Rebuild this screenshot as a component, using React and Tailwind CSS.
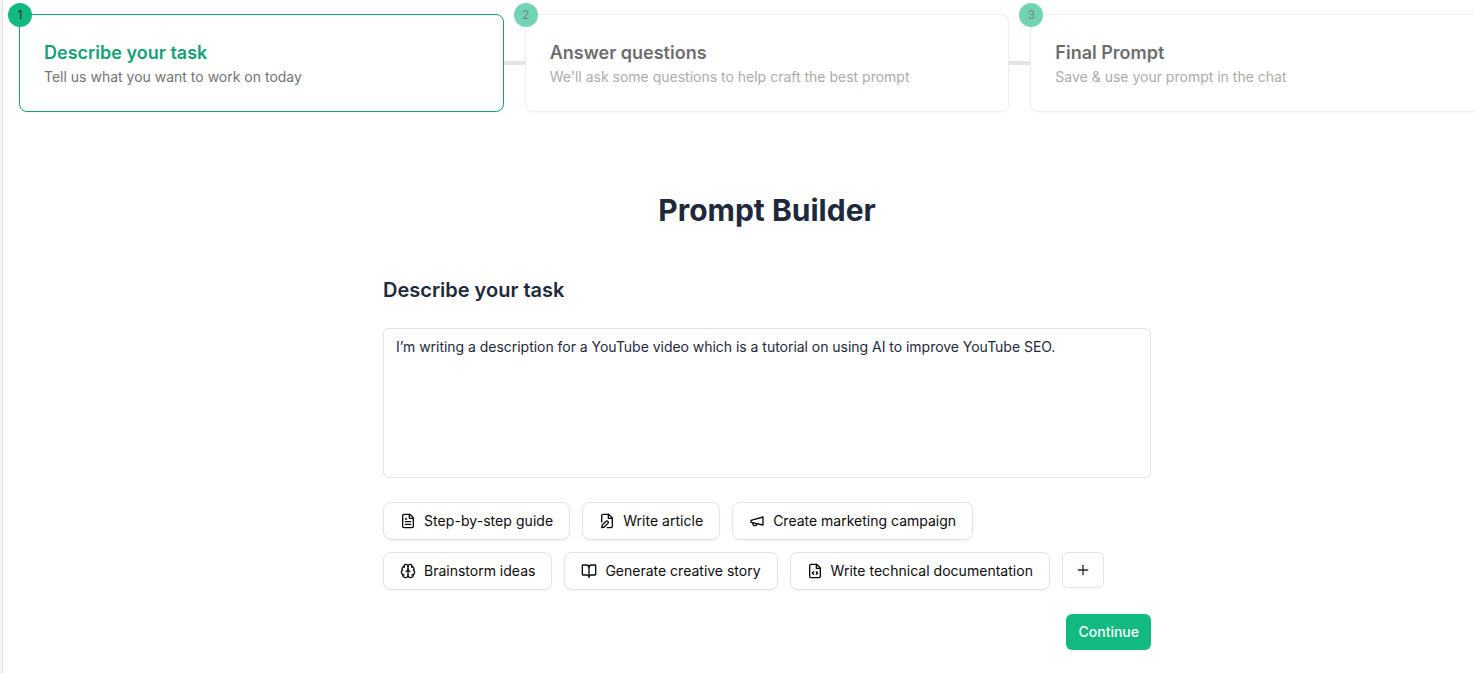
import { Fragment, useState } from 'react'
import { BookOpen, Brain, FileText, Plus } from 'lucide-react'

const steps = [
  { title: 'Describe your task', text: 'Tell us what you want to work on today' },
  { title: 'Answer questions', text: "We'll ask some questions to help craft the best prompt" },
  { title: 'Final Prompt', text: 'Save & use your prompt in the chat' },
]

function Icon({ children, className }) {
  return (
    <svg
      viewBox="0 0 24 24"
      fill="none"
      stroke="currentColor"
      strokeWidth="2"
      strokeLinecap="round"
      strokeLinejoin="round"
      className={className}
    >
      {children}
    </svg>
  )
}

function FileEdit({ className }) {
  return (
    <Icon className={className}>
      <path d="M4 13.5V4a2 2 0 0 1 2-2h8.5L20 7.5V20a2 2 0 0 1-2 2h-5.5" />
      <path d="M14 2v6h6" />
      <path d="M10.42 12.61a2.1 2.1 0 1 1 2.97 2.97L7.95 21 4 22l.99-3.95 5.43-5.44Z" />
    </Icon>
  )
}

function Megaphone({ className }) {
  return (
    <Icon className={className}>
      <path d="m3 11 18-5v12L3 14v-3z" />
      <path d="M11.6 16.8a3 3 0 1 1-5.8-1.6" />
    </Icon>
  )
}

function FileCode({ className }) {
  return (
    <Icon className={className}>
      <path d="M14.5 2H6a2 2 0 0 0-2 2v16a2 2 0 0 0 2 2h12a2 2 0 0 0 2-2V7.5L14.5 2z" />
      <path d="M14 2v6h6" />
      <path d="m10 13-2 2 2 2" />
      <path d="m14 17 2-2-2-2" />
    </Icon>
  )
}

const suggestions = [
  { label: 'Step-by-step guide', icon: FileText, spacing: 'tracking-[0.06px]' },
  { label: 'Write article', icon: FileEdit, spacing: 'tracking-[0.02px]' },
  { label: 'Create marketing campaign', icon: Megaphone, spacing: 'tracking-normal' },
  { label: 'Brainstorm ideas', icon: Brain, spacing: 'tracking-normal' },
  { label: 'Generate creative story', icon: BookOpen, spacing: 'tracking-normal' },
  { label: 'Write technical documentation', icon: FileCode, spacing: 'tracking-[0.025px]' },
]

function Step({ number, title, text, active }) {
  return (
    <div
      className={`relative h-[98px] flex-1 rounded-lg border bg-white px-6 pt-[25px] shadow-xs ${
        active ? 'border-[#16a07a]' : 'border-[#e4e4e4] opacity-60'
      }`}
    >
      <span className="absolute -left-3 -top-3 flex size-6 items-center justify-center rounded-full bg-[#12b981] text-xs text-[#1e293b]">
        {number}
      </span>
      <h3 className={`text-lg leading-[25px] font-semibold ${active ? 'text-[#16a07a]' : 'text-[#0a0a0a]'}`}>
        {title}
      </h3>
      <p className="text-sm leading-6 text-[#737373]">{text}</p>
    </div>
  )
}

export default function App() {
  const [task, setTask] = useState(
    'I’m writing a description for a YouTube video which is a tutorial on using AI to improve YouTube SEO.'
  )

  return (
    <div className="flex h-screen overflow-hidden bg-[#f5f5f4] pl-0.5 font-['Inter',sans-serif]">
      <main className="w-[1529px] shrink-0 border-l border-[#e4e4e4] bg-white px-4 pt-3.5">
        <div className="flex items-center">
          {steps.map((step, i) => (
            <Fragment key={step.title}>
              {i > 0 && <div className="h-1 w-[21px] bg-[#e4e4e4]" />}
              <Step number={i + 1} active={i === 0} {...step} />
            </Fragment>
          ))}
        </div>

        <div className="mx-auto flex w-[768px] flex-col pt-20">
          <h1 className="text-center text-3xl font-bold text-[#1e293b]">Prompt Builder</h1>
          <h2 className="mt-12 text-xl font-semibold text-[#1e293b]">Describe your task</h2>
          <textarea
            value={task}
            onChange={(e) => setTask(e.target.value)}
            className="mt-6 h-[150px] resize-none rounded-md border border-[#e4e4e4] px-3 py-2 text-sm tracking-[-0.03px] text-[#1e293b] outline-none"
          />
          <div className="mt-6 flex flex-wrap gap-3">
            {suggestions.map(({ label, icon: SuggestionIcon, spacing }) => (
              <button
                key={label}
                className={`flex h-[38px] items-center gap-2 rounded-lg border border-[#e4e4e4] bg-white px-4 text-sm text-[#0a0a0a] shadow-xs ${spacing}`}
              >
                <SuggestionIcon className="size-4" />
                {label}
              </button>
            ))}
            <button className="flex h-9 w-[42px] items-center justify-center rounded-md border border-[#e4e4e4] text-[#1e293b]">
              <Plus className="size-4" />
            </button>
          </div>
          <button className="mt-6 h-9 self-end rounded-md bg-[#12b981] px-3 text-sm font-medium text-[#f8fafc]">
            Continue
          </button>
        </div>
      </main>
    </div>
  )
}
